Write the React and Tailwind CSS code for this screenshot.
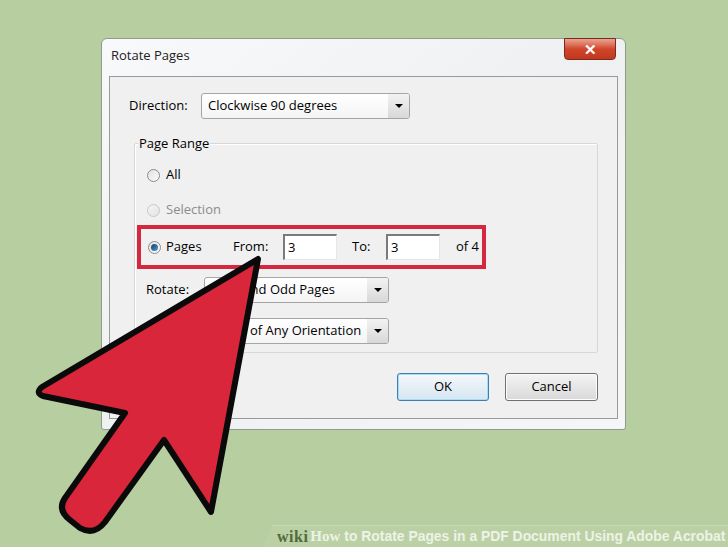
import React from 'react';

const ui = "font-['Open_Sans',sans-serif] text-[13px] text-black";

function Radio({ checked, disabled }) {
  return (
    <span
      className={`flex h-[13px] w-[13px] flex-shrink-0 items-center justify-center rounded-full border bg-gradient-to-br ${
        disabled ? 'border-[#c8c8c8] from-[#f4f4f4] to-[#e4e4e4]' : 'border-[#8a8a8a] from-[#e2e2e2] to-[#fbfbfb]'
      }`}
    >
      {checked && <span className="h-[7px] w-[7px] rounded-full bg-gradient-to-br from-[#0b3d6b] to-[#5c9ccf]" />}
    </span>
  );
}

function Select({ value, width }) {
  return (
    <div className={`flex h-[26px] ${width} items-center rounded-[3px] border border-[#a5a5a5] bg-gradient-to-b from-white to-[#f4f4f4]`}>
      <span className="flex-1 truncate pl-[6px]">{value}</span>
      <span className="flex h-full w-[21px] items-center justify-center rounded-r-[2px] bg-gradient-to-b from-[#f3f3f3] to-[#d8d8d8]">
        <span className="h-0 w-0 border-x-[4px] border-t-[4px] border-x-transparent border-t-black" />
      </span>
    </div>
  );
}

function Field({ value }) {
  return (
    <div className="flex h-[26px] w-[54px] items-center border-t-2 border-l-2 border-r border-b border-t-[#7a7a7a] border-l-[#7a7a7a] border-r-[#e6e6e6] border-b-[#e6e6e6] bg-white pl-[3px]">
      {value}
    </div>
  );
}

function Arrow() {
  return (
    <svg className="pointer-events-none absolute inset-0" width="728" height="547" viewBox="0 0 728 547">
      <path
        d="M258 259 L211 512 L164 440 L105 522 Q94 536 80 528 L70 520 Q57 510 65 498 L125 413 L43 396 Q35 393 42 387 Z"
        fill="#d9263a"
        stroke="#0a0a0a"
        strokeWidth="6"
        strokeLinejoin="round"
      />
    </svg>
  );
}

export default function App() {
  return (
    <div className="relative flex h-[547px] w-[728px] flex-col overflow-hidden bg-[#b6cea0]">
      <div className="pl-[101px] pt-[38px]">
        <div className={`flex h-[392px] w-[525px] flex-col rounded-t-[6px] rounded-b-[3px] border border-[#8f9b8c] bg-gradient-to-br from-[#f8f9fa] via-[#eef0f2] to-[#f5f6f7] px-[7px] pb-[10px] ${ui}`}>
          <div className="flex h-[37px] items-start justify-between">
            <span className="pl-[2px] pt-[7px] text-[#222]">Rotate Pages</span>
            <button className="mr-[2px] mt-[-1px] flex h-[22px] w-[52px] items-center justify-center rounded-b-[4px] border border-[#7a2a1e] bg-gradient-to-b from-[#e8a493] via-[#d1452a] to-[#c2381f] text-[15px] font-bold leading-none text-white">
              ✕
            </button>
          </div>
          <div className="flex flex-1 flex-col border border-[#9a9a9a] bg-[#f0f0f0] pl-[24px] pr-[19px]">
            <div className="-ml-[5px] mt-[16px] flex items-center">
              <span className="w-[72px]">Direction:</span>
              <Select value="Clockwise 90 degrees" width="w-[209px]" />
            </div>

            <div className="relative mt-[24px] flex h-[210px] flex-col rounded-[2px] border border-[#d8d8d8] pt-[21px] shadow-[inset_1px_1px_0_#fff]">
              <span className="absolute -top-[10px] left-[3px] bg-[#f0f0f0] px-[1px]">Page Range</span>
              <div className="flex h-[20px] items-center gap-[6px] pl-[12px]">
                <Radio />
                <span>All</span>
              </div>
              <div className="mt-[15px] flex h-[20px] items-center gap-[6px] pl-[12px] text-[#8c8c8c]">
                <Radio disabled />
                <span>Selection</span>
              </div>
              <div className="ml-[2px] mt-[5px] flex h-[44px] w-[349px] items-center border-4 border-[#d3283f] pl-[7px]">
                <Radio checked />
                <span className="ml-[5px] w-[67px]">Pages</span>
                <span className="w-[50px]">From:</span>
                <Field value="3" />
                <span className="ml-[15px] w-[34px]">To:</span>
                <Field value="3" />
                <span className="ml-[16px]">of 4</span>
              </div>
              <div className="mt-[8px] flex items-center pl-[11px]">
                <span className="w-[58px]">Rotate:</span>
                <Select value="Even and Odd Pages" width="w-[185px]" />
              </div>
              <div className="mt-[15px] flex items-center pl-[11px]">
                <span className="w-[58px]">Pages:</span>
                <Select value="Pages of Any Orientation" width="w-[185px]" />
              </div>
            </div>

            <div className="mt-[20px] flex justify-end gap-[16px]">
              <button className="h-[28px] w-[92px] rounded-[3px] border border-[#3c7fb1] bg-gradient-to-b from-[#f3f8fb] to-[#d6e6f1] shadow-[inset_0_0_0_1px_#a8dcf5]">
                OK
              </button>
              <button className="h-[28px] w-[93px] rounded-[3px] border border-[#707070] bg-gradient-to-b from-[#f4f4f4] to-[#d9d9d9] shadow-[inset_0_0_0_1px_#fcfcfc]">
                Cancel
              </button>
            </div>
          </div>
        </div>
      </div>

      <div className="flex-1" />

      <div className="ml-auto flex h-[22px] w-[465px] items-center border-t border-[#c6d9b3] bg-[#bbd1a5] pl-[14px] [clip-path:polygon(9px_0,100%_0,100%_100%,0_100%)] font-['Liberation_Sans',sans-serif] text-[13.9px] font-bold text-[#edf3e5]">
        <span className="font-['Liberation_Serif',serif] text-[16px] tracking-[0.5px] text-[#4f6a3c]">wiki</span>
        <span className="ml-[2px] font-['Liberation_Serif',serif] text-[15px]">How</span>
        <span className="ml-[4px] whitespace-nowrap">to Rotate Pages in a PDF Document Using Adobe Acrobat</span>
      </div>

      <Arrow />
    </div>
  );
}
